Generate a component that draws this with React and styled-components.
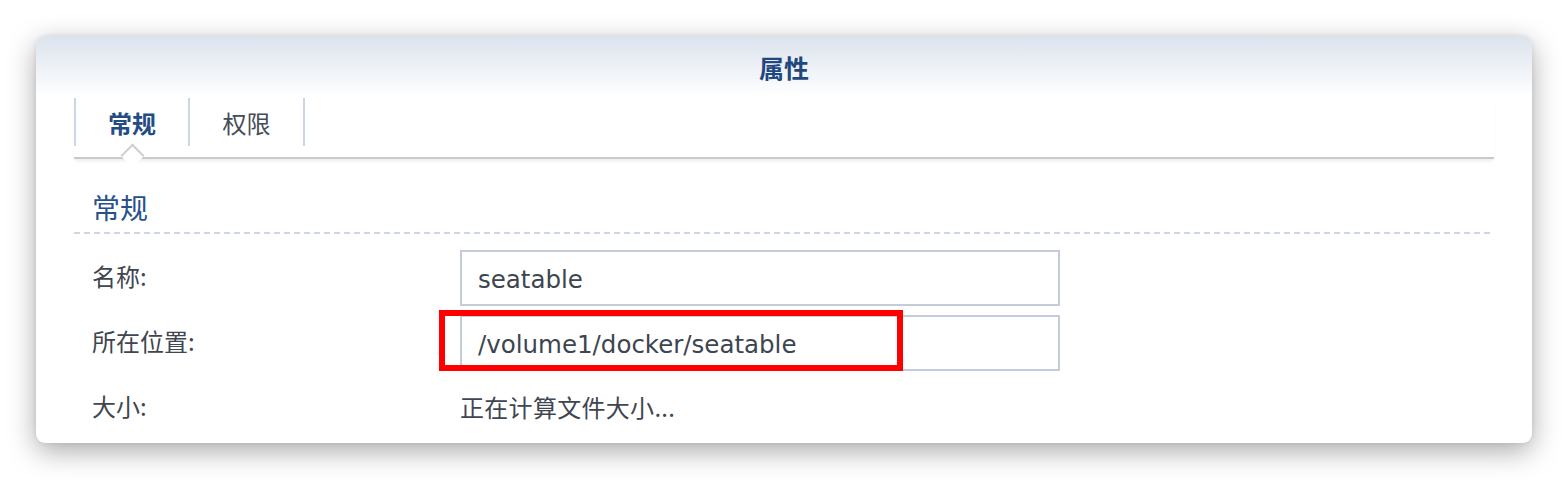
import React from "react";
import styled, { createGlobalStyle } from "styled-components";

const GlobalStyle = createGlobalStyle`
  html, body {
    margin: 0;
    padding: 0;
    background: #ffffff;
  }
  body {
    font-family: "DejaVu Sans", "Noto Sans CJK SC", sans-serif;
  }
`;

const Page = styled.div`
  width: 1568px;
  height: 480px;
  padding: 36px 36px 0 36px;
  box-sizing: border-box;
`;

const Dialog = styled.div`
  width: 1496px;
  height: 407px;
  border-radius: 9px;
  background: #ffffff;
  box-shadow: 0 8px 28px rgba(0, 0, 0, 0.34), 0 0 4px rgba(0, 0, 0, 0.08);
  display: flex;
  flex-direction: column;
  overflow: hidden;
`;

const Header = styled.div`
  height: 60px;
  flex-shrink: 0;
  background: linear-gradient(to bottom, #dce3ed 0%, #eef2f7 55%, #ffffff 100%);
  display: flex;
  align-items: center;
  justify-content: center;
  padding-top: 2px;
  box-sizing: border-box;
`;

const Title = styled.h1`
  margin: 0;
  font-family: "Noto Sans CJK SC", sans-serif;
  font-size: 25px;
  font-weight: 700;
  color: #1f4880;
`;

const Body = styled.div`
  padding: 2px 38px 0 38px;
  display: flex;
  flex-direction: column;
`;

const TabBar = styled.div`
  display: flex;
  height: 59px;
  border-bottom: 2px solid #cacaca;
  box-shadow: 0 3px 3px -1px rgba(0, 0, 0, 0.08);
`;

const Tab = styled.div`
  position: relative;
  width: ${({ $width }) => $width}px;
  height: 48px;
  display: flex;
  align-items: center;
  justify-content: center;
  font-family: "Noto Sans CJK SC", sans-serif;
  font-size: 24px;
  font-weight: ${({ $active }) => ($active ? 700 : 400)};
  color: ${({ $active }) => ($active ? "#234c84" : "#444c56")};
  border-left: ${({ $first }) => ($first ? "2px solid #ccd7e5" : "none")};
  border-right: 2px solid #ccd7e5;
  box-sizing: border-box;
`;

const Notch = styled.span`
  position: absolute;
  left: 50%;
  bottom: -18px;
  width: 17px;
  height: 17px;
  margin-left: -8px;
  background: #ffffff;
  border-top: 2px solid #cfcfcf;
  border-left: 2px solid #cfcfcf;
  transform: rotate(45deg);
  box-sizing: border-box;
`;

const SectionTitle = styled.h2`
  margin: 28px 0 0 0;
  padding: 0 0 5px 18px;
  font-family: "Noto Sans CJK SC", sans-serif;
  font-size: 28px;
  font-weight: 400;
  line-height: 40px;
  color: #27518b;
`;

const Dashed = styled.div`
  height: 2px;
  background: repeating-linear-gradient(
    to right,
    #cdd6e4 0 6px,
    transparent 6px 10px
  );
`;

const Form = styled.div`
  margin-top: 16px;
  display: flex;
  flex-direction: column;
  gap: 9px;
`;

const Row = styled.div`
  display: grid;
  grid-template-columns: 368px 1fr;
  align-items: center;
  min-height: 56px;
  padding-left: 18px;
`;

const Label = styled.div`
  font-family: "Noto Sans CJK SC", sans-serif;
  font-size: 24px;
  line-height: 32px;
  padding-bottom: 4px;
  color: #3f4650;
`;

const Field = styled.div`
  position: relative;
  width: 600px;
`;

const Input = styled.div`
  height: 56px;
  box-sizing: border-box;
  border: 2px solid #c3ccd8;
  background: #ffffff;
  padding: 2px 16px 0 16px;
  display: flex;
  align-items: center;
  font-size: 24.5px;
  color: #3d4550;
`;

const Value = styled.div`
  font-family: "Noto Sans CJK SC", sans-serif;
  font-size: 24px;
  line-height: 32px;
  padding-bottom: 2px;
  letter-spacing: 0.3px;
  color: #3f4650;
`;

const Highlight = styled.div`
  position: absolute;
  left: -21px;
  top: -5px;
  width: 464px;
  height: 61px;
  border: 6px solid #ff0000;
  box-sizing: border-box;
  pointer-events: none;
`;

export default function App() {
  return (
    <>
      <GlobalStyle />
      <Page>
        <Dialog>
          <Header>
            <Title>属性</Title>
          </Header>
          <Body>
            <TabBar>
              <Tab $width={116} $first $active>
                常规
                <Notch />
              </Tab>
              <Tab $width={115}>权限</Tab>
            </TabBar>
            <SectionTitle>常规</SectionTitle>
            <Dashed />
            <Form>
              <Row>
                <Label>名称:</Label>
                <Field>
                  <Input>seatable</Input>
                </Field>
              </Row>
              <Row>
                <Label>所在位置:</Label>
                <Field>
                  <Input>/volume1/docker/seatable</Input>
                  <Highlight />
                </Field>
              </Row>
              <Row>
                <Label>大小:</Label>
                <Value>正在计算文件大小...</Value>
              </Row>
            </Form>
          </Body>
        </Dialog>
      </Page>
    </>
  );
}
